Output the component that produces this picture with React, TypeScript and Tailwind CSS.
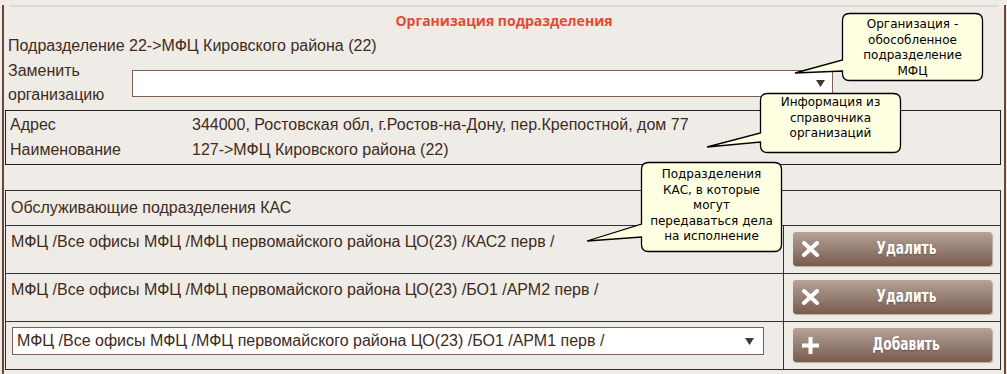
import React from "react";

const bubble = (
  x0: number, y0: number, x1: number, y1: number,
  ya: number, yb: number, tx: number, ty: number, r = 7
) =>
  `M${x0 + r},${y0} H${x1 - r} Q${x1},${y0} ${x1},${y0 + r} V${y1 - r} Q${x1},${y1} ${x1 - r},${y1} H${x0 + r} Q${x0},${y1} ${x0},${y1 - r} V${yb} L${tx},${ty} L${x0},${ya} V${y0 + r} Q${x0},${y0} ${x0 + r},${y0} Z`;

const callouts = [
  { x0: 842.5, y0: 13.5, x1: 982.5, y1: 80.5, ya: 60, yb: 71, tx: 795, ty: 73, textTop: 17, lines: ["Организация -", "обособленное", "подразделение", "МФЦ"] },
  { x0: 760.5, y0: 93.5, x1: 900.5, y1: 152.5, ya: 133, yb: 142, tx: 707, ty: 147, textTop: 95, lines: ["Информация из", "справочника", "организаций"] },
  { x0: 641.5, y0: 162.5, x1: 781.5, y1: 251.5, ya: 224, yb: 237, tx: 587, ty: 241, textTop: 167, lines: ["Подразделения", "КАС, в которые", "могут", "передаваться дела", "на исполнение"] },
];

function Arrow() {
  return (
    <svg width="9" height="7" viewBox="0 0 9 7" className="shrink-0">
      <polygon points="0,0 9,0 4.5,7" fill="#4a3428" />
    </svg>
  );
}

function ActionButton({ kind }: { kind: "del" | "add" }) {
  return (
    <button className="relative flex h-[34px] w-[199px] items-center rounded-[3px] bg-gradient-to-b from-[#b3a399] to-[#7a5c4e] shadow-[1px_1px_1px_rgba(0,0,0,0.25)]">
      <span className="absolute left-[9px] top-[9px]">
        {kind === "del" ? (
          <svg width="17" height="16" viewBox="0 0 17 16">
            <path d="M2 2 L15 14 M15 2 L2 14" stroke="#fff" strokeWidth="4" strokeLinecap="round" />
          </svg>
        ) : (
          <svg width="17" height="17" viewBox="0 0 17 17">
            <path d="M8.5 0 V17 M0 8.5 H17" stroke="#fff" strokeWidth="4" />
          </svg>
        )}
      </span>
      <span className="w-full pl-[28px] text-center">
        <span
          className="inline-block scale-x-[0.8] text-[17px] font-bold text-white [text-shadow:0_1px_1px_rgba(0,0,0,0.25)]"
          style={{ fontFamily: '"DejaVu Sans Condensed", "DejaVu Sans", sans-serif' }}
        >
          {kind === "del" ? "Удалить" : "Добавить"}
        </span>
      </span>
    </button>
  );
}

export default function App() {
  const rows = [
    "МФЦ /Все офисы МФЦ /МФЦ первомайского района ЦО(23) /КАС2 перв /",
    "МФЦ /Все офисы МФЦ /МФЦ первомайского района ЦО(23) /БО1 /АРМ2 перв /",
  ];

  return (
    <div
      className="relative h-[374px] w-[1007px] overflow-hidden bg-[#efebe7] text-[16px] text-[#3f2b20]"
      style={{ fontFamily: '"Liberation Sans", Arial, sans-serif' }}
    >
      <div className="ml-[2px] mr-px h-full border-x-2 border-[#6b4632]">
        {/* top rule */}
        <div className="mx-[6px] mt-[5px] h-[2px] bg-[#dcd8d4]" />

        <div
          className="flex h-[26px] items-center justify-center text-[14px] font-bold text-[#e24a33]"
          style={{ fontFamily: '"Open Sans", sans-serif' }}
        >
          Организация подразделения
        </div>

        <div className="flex h-[26px] items-center pl-[4px]">Подразделение 22-&gt;МФЦ Кировского района (22)</div>

        <div className="flex h-[48px]">
          <div className="w-[128px] pl-[4px] leading-[24px]">
            Заменить
            <br />
            организацию
          </div>
          <div className="mt-[11px] flex h-[27px] w-[701px] items-center justify-end border border-[#7f5f4f] bg-white pr-[7px]">
            <Arrow />
          </div>
        </div>

        {/* org info */}
        <div className="ml-px mr-[3px] mt-[3px] border border-[#222] pb-[2px] pl-[4px] pt-px">
          <div className="flex h-[25px] items-center">
            <span className="w-[182px]">Адрес</span>
            <span>344000, Ростовская обл, г.Ростов-на-Дону, пер.Крепостной, дом 77</span>
          </div>
          <div className="flex h-[25px] items-center">
            <span className="w-[182px]">Наименование</span>
            <span>127-&gt;МФЦ Кировского района (22)</span>
          </div>
        </div>

        {/* KAS units */}
        <div className="ml-px mr-[3px] mt-[25px] border border-[#333]">
          <div className="flex h-[34px] items-center pl-[5px]">Обслуживающие подразделения КАС</div>
          {rows.map((r) => (
            <div key={r} className="flex h-[48px] border-t border-[#333]">
              <div className="flex-1 pl-[5px] pt-[7px] leading-[18px]">{r}</div>
              <div className="w-[217px] border-l border-[#333] pl-[9px] pt-[6px]">
                <ActionButton kind="del" />
              </div>
            </div>
          ))}
          <div className="flex h-[48px] border-t border-[#333]">
            <div className="flex-1 pl-[6px] pr-[19px] pt-[5px]">
              <div className="flex h-[28px] items-center justify-between border border-[#7f5f4f] bg-white pl-[4px] pr-[9px]">
                <span>МФЦ /Все офисы МФЦ /МФЦ первомайского района ЦО(23) /БО1 /АРМ1 перв /</span>
                <Arrow />
              </div>
            </div>
            <div className="w-[217px] border-l border-[#333] pl-[9px] pt-[6px]">
              <ActionButton kind="add" />
            </div>
          </div>
        </div>
      </div>

      {/* hint callouts */}
      <svg className="pointer-events-none absolute left-0 top-0" width="1007" height="374">
        {callouts.map((c, i) => (
          <path
            key={i}
            d={bubble(c.x0, c.y0, c.x1, c.y1, c.ya, c.yb, c.tx, c.ty)}
            fill="#ffffe1"
            stroke="#000"
            strokeWidth="1.3"
          />
        ))}
      </svg>
      {callouts.map((c, i) => (
        <div
          key={i}
          className="absolute text-center text-[12px] leading-[15.5px] text-black"
          style={{ left: c.x0, top: c.textTop, width: c.x1 - c.x0, fontFamily: '"DejaVu Sans", sans-serif' }}
        >
          {c.lines.map((l) => (
            <div key={l}>{l}</div>
          ))}
        </div>
      ))}
    </div>
  );
}
